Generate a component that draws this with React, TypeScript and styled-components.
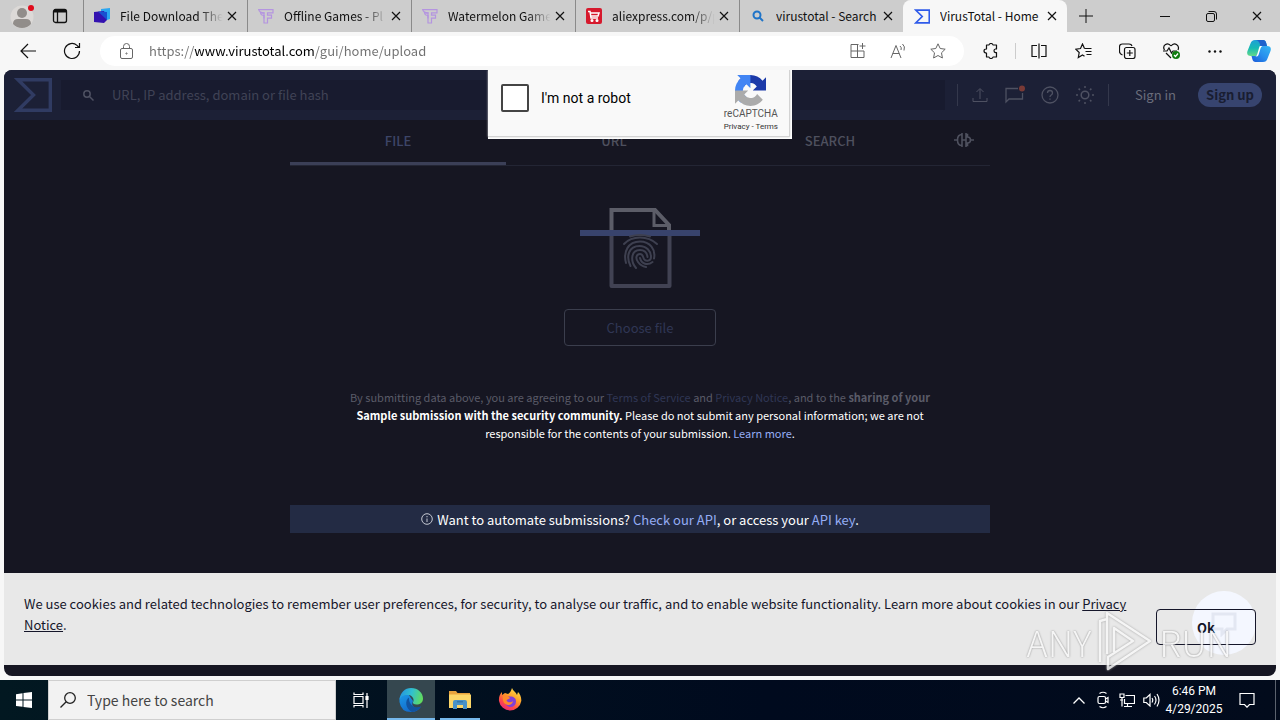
import React from "react";
import styled, { createGlobalStyle, css } from "styled-components";

const chromeFont = `"Noto Sans CJK SC", "Open Sans", sans-serif`;
const pageFont = `"Noto Sans CJK SC", "Noto Sans", sans-serif`;

const Global = createGlobalStyle`
  * { box-sizing: border-box; }
  body { margin: 0; background: #f7f7f7; font-family: ${chromeFont}; font-size: 12px; color: #111; }
  button, input { font: inherit; color: inherit; border: 0; padding: 0; margin: 0; background: none; }
  a { text-decoration: none; color: inherit; }
  svg { display: block; flex: none; }
  p { margin: 0; }
`;

const Desktop = styled.div`
  min-height: 100vh;
  display: flex;
  flex-direction: column;
`;

/* ---------- tab strip ---------- */
const TabStrip = styled.header`
  display: flex;
  height: 32px;
  background: #cdcdcd;
`;
const StripStart = styled.div`
  width: 83px;
  flex: none;
  display: flex;
  align-items: center;
  gap: 18px;
  padding-left: 10px;
`;
const IconButton = styled.button<{ $w?: number }>`
  display: flex;
  align-items: center;
  justify-content: center;
  flex: none;
  width: ${(p) => (p.$w ? p.$w + "px" : "auto")};
  height: 100%;
`;
const BrowserTab = styled.div<{ $active?: boolean }>`
  width: 164px;
  flex: 0 1 auto;
  min-width: 0;
  display: flex;
  align-items: center;
  padding: 0 10px;
  border-left: 1px solid ${(p) => (p.$active ? "#f7f7f7" : "#8a8a8a")};
  ${(p) =>
    p.$active &&
    css`
      background-color: #f7f7f7;
      border-radius: 8px 8px 0 0;
    `}
`;
const TabTitle = styled.span<{ $fade?: boolean }>`
  flex: 1;
  min-width: 0;
  margin-left: 10px;
  overflow: hidden;
  white-space: nowrap;
  font-size: 12px;
  line-height: 20px;
  ${(p) =>
    p.$fade &&
    css`
      mask-image: linear-gradient(90deg, #000 74%, transparent 96%);
    `}
`;
const WindowButtons = styled.div`
  margin-left: auto;
  display: flex;
`;

/* ---------- toolbar ---------- */
const Toolbar = styled.div`
  height: 38px;
  display: flex;
  align-items: center;
  background: #f7f7f7;
  padding-left: 6px;
`;
const AddressBar = styled.label`
  flex: 1;
  height: 30px;
  margin: 0 4px 0 6px;
  padding: 0 6px 0 20px;
  border-radius: 15px;
  background: #fff;
  display: flex;
  align-items: center;
  color: #666;
`;
const AddressInput = styled.input`
  flex: 1;
  min-width: 0;
  margin-left: 16px;
  outline: 0;
  font-size: 13px;
  line-height: 20px;
  background: linear-gradient(90deg, #707070 45px, #000 45px 165px, #707070 165px);
  background-clip: text;
  -webkit-text-fill-color: transparent;
`;
const ToolDivider = styled.span`
  width: 1px;
  height: 16px;
  margin: 0 1px;
  background: #ccc;
`;

/* ---------- web page ---------- */
const Page = styled.main`
  position: relative;
  flex: 1;
  margin: 0 4px 4px;
  display: flex;
  flex-direction: column;
  border-radius: 8px;
  overflow: hidden;
  background: #161622;
  font-family: ${pageFont};
`;
const SiteHeader = styled.div`
  height: 50px;
  display: flex;
  align-items: center;
  padding: 0 14px 0 10px;
  background: #1c2036;
  color: #4e5162;
  font-size: 13px;
`;
const SiteSearch = styled.label`
  flex: 1;
  height: 30px;
  margin: 0 12px 0 9px;
  padding-left: 22px;
  display: flex;
  align-items: center;
  gap: 18px;
  background: #181b2f;
`;
const SiteSearchInput = styled.input`
  flex: 1;
  outline: 0;
  font-size: 13px;
  line-height: 20px;
  &::placeholder { color: #404356; opacity: 1; }
`;
const SiteDivider = styled.span`
  width: 1px;
  height: 22px;
  background: #34384c;
`;
const SiteTools = styled.div`
  display: flex;
  align-items: center;
  gap: 16px;
  padding: 0 13px 0 14px;
`;
const SignIn = styled.a`
  margin: 0 22px 0 26px;
  font-size: 13px;
  line-height: 20px;
  color: #6a6d7b;
`;
const SignUp = styled.a`
  width: 64px;
  border-radius: 12px;
  background: #37446f;
  color: #191d31;
  font-weight: 700;
  font-size: 13px;
  line-height: 24px;
  text-align: center;
`;

const Column = styled.section`
  width: 100%;
  max-width: 700px;
  margin: 0 auto;
  display: flex;
  flex-direction: column;
  align-items: center;
`;
const ModeTabs = styled.nav`
  width: 100%;
  display: flex;
  border-bottom: 1px solid #232534;
`;
const ModeTab = styled.button<{ $active?: boolean; $narrow?: boolean }>`
  flex: ${(p) => (p.$narrow ? "0 0 52px" : "1")};
  height: 45px;
  padding-bottom: 5px;
  display: flex;
  align-items: center;
  justify-content: center;
  font-size: 13px;
  font-weight: 500;
  color: ${(p) => (p.$active ? "#3d4567" : "#4e505e")};
  box-shadow: ${(p) => (p.$active ? "inset 0 -3px #3b3f57" : "none")};
`;
const FileArt = styled.div`
  margin-top: 42px;
`;
const ChooseFile = styled.button`
  width: 152px;
  height: 37px;
  margin-top: 21px;
  border: 1px solid #3b3e4d;
  border-radius: 4px;
  color: #303655;
  font-size: 13px;
`;
const Terms = styled.p`
  margin-top: 42px;
  text-align: center;
  font-size: 11px;
  line-height: 18px;
  color: #fff;
`;
const Dim = styled.span`
  color: #5a5b68;
`;
const TermsLink = styled.a<{ $dim?: boolean }>`
  color: ${(p) => (p.$dim ? "#303655" : "#95adf5")};
`;
const ApiBar = styled.div`
  width: 100%;
  height: 28px;
  margin-top: 63px;
  display: flex;
  align-items: center;
  justify-content: center;
  gap: 4px;
  background: #232b44;
  color: #fff;
  font-size: 13px;
`;
const CookieBar = styled.aside`
  margin-top: auto;
  margin-bottom: 11px;
  min-height: 92px;
  padding: 20px;
  display: flex;
  justify-content: space-between;
  background: #e8e8e8;
  color: #15162a;
`;
const CookieText = styled.p`
  font-size: 13px;
  line-height: 21px;
  max-width: 1104px;
  a { text-decoration: underline; }
`;
const OkButton = styled.button`
  flex: none;
  position: relative;
  z-index: 1;
  width: 100px;
  height: 36px;
  margin-top: 16px;
  border: 1px solid #15162a;
  border-radius: 4px;
  font-size: 13px;
  font-weight: 700;
`;
const ChatBubble = styled.div`
  position: absolute;
  right: 20px;
  bottom: 21px;
  width: 64px;
  height: 64px;
  border-radius: 50%;
  background: #f4f7ff;
  display: flex;
  align-items: center;
  justify-content: center;
`;
const Watermark = styled.div`
  position: absolute;
  z-index: 2;
  right: 44px;
  bottom: 2px;
  display: flex;
  align-items: center;
  gap: 6px;
  font-size: 36px;
  font-weight: 300;
  line-height: 66px;
  color: #f8f8f8;
  opacity: 0.85;
  text-shadow: 0 0 2px #777;
  pointer-events: none;
  svg { filter: drop-shadow(0 0 1px #999); }
`;

/* ---------- captcha ---------- */
const Captcha = styled.div`
  position: absolute;
  top: 0;
  left: 50%;
  width: 304px;
  height: 69px;
  margin-left: -152px;
  padding: 0 2px 2px 0;
  background: #fff;
  color: #000;
`;
const CaptchaBox = styled.div`
  height: 100%;
  padding: 0 11px 0 13px;
  display: flex;
  align-items: center;
  justify-content: space-between;
  background: #f9f9f9;
  border: solid #d3d3d3;
  border-width: 0 1px 1px 0;
  box-shadow: 0 0 2px #ccc;
`;
const CaptchaLabel = styled.label`
  display: flex;
  align-items: center;
  gap: 12px;
  padding-bottom: 10px;
  font-family: Roboto, sans-serif;
  font-size: 14px;
`;
const CaptchaCheck = styled.input`
  appearance: none;
  width: 28px;
  height: 28px;
  border: 2px solid #444;
  border-radius: 2px;
  background: #fff;
`;
const CaptchaBrand = styled.div`
  display: flex;
  flex-direction: column;
  align-items: center;
  font-family: Roboto, sans-serif;
  font-size: 10px;
  line-height: 16px;
  color: #555;
`;
const CaptchaLinks = styled.div`
  font-size: 8px;
  line-height: 10px;
  color: #333;
`;

/* ---------- task bar ---------- */
const TaskBar = styled.footer`
  height: 40px;
  display: flex;
  align-items: stretch;
  background: linear-gradient(90deg, #021821, #000a1e 60%, #020b1c);
  color: #fff;
`;
const TaskSearch = styled.label`
  width: 288px;
  flex: 0 1 auto;
  display: flex;
  align-items: center;
  gap: 11px;
  padding-left: 11px;
  border: 1px solid #cfcfcf;
  background: #f2f2f2;
  color: #222;
`;
const TaskSearchInput = styled.input`
  flex: 1;
  min-width: 0;
  outline: 0;
  font-size: 14px;
  &::placeholder { color: #444; opacity: 1; }
`;
const TaskApps = styled.div`
  display: flex;
  gap: 1px;
`;
const TaskApp = styled.button<{ $active?: boolean; $line?: boolean }>`
  width: ${(p) => (p.$active || p.$line ? 48 : 50)}px;
  flex: none;
  position: relative;
  display: flex;
  align-items: center;
  justify-content: center;
  background: ${(p) => (p.$active ? "#35474f" : "none")};
  &::after {
    content: "";
    position: absolute;
    bottom: 0;
    left: ${(p) => (p.$active ? "0" : "4px")};
    right: ${(p) => (p.$active ? "0" : "4px")};
    height: ${(p) => (p.$active || p.$line ? "2px" : "0")};
    background: #76b9ed;
  }
`;
const Tray = styled.div`
  margin-left: auto;
  display: flex;
  align-items: stretch;
`;
const Clock = styled.time`
  width: 62px;
  text-align: center;
  font-family: Roboto, sans-serif;
  font-size: 12px;
  line-height: 18px;
  padding-top: 2px;
`;
const ShowDesktop = styled.button`
  width: 5px;
  margin-left: 6px;
  border-left: 1px solid #5b626e;
`;

/* ---------- icons ---------- */
type IconProps = { w: number; h?: number; box?: string; sw?: number; color?: string; children: React.ReactNode };
const Icon = ({ w, h, box, sw = 1, color = "currentColor", children }: IconProps) => (
  <svg width={w} height={h ?? w} viewBox={box ?? `0 0 ${w} ${h ?? w}`} fill="none" stroke={color} strokeWidth={sw} aria-hidden="true">
    {children}
  </svg>
);

const Profile = () => (
  <Icon w={24}>
    <circle cx="12" cy="13" r="11.5" fill="#dcd9d7" stroke="none" />
    <circle cx="12" cy="9" r="5" fill="#918d8a" stroke="none" />
    <path d="M3 20q0-5 5-5h8q5 0 5 5q-3.500 4-9 4t-9-4z" fill="#918d8a" stroke="none" />
    <circle cx="21" cy="4" r="3" fill="#e00b1c" stroke="none" />
  </Icon>
);
const Workspaces = () => (
  <Icon w={16} sw={1.3}>
    <rect x="1.500" y="1.500" width="13" height="13" rx="2" />
    <path d="M5.500 4v10.500" />
    <path d="M2 3h12" strokeWidth="3" />
  </Icon>
);
const Close = () => (
  <Icon w={10} sw={1.2}>
    <path d="M1 1l8 8M9 1l-8 8" />
  </Icon>
);
const FavFile = () => (
  <Icon w={16}>
    <path d="M7 1l9-1v11l-3 1-6-2z" fill="#2ba6f0" stroke="none" />
    <path d="M0 4l10-1 3 9-3 3-10-1z" fill="#3312b0" stroke="none" />
    <path d="M4 3.600l9 .4v8z" fill="#1950d0" stroke="none" />
  </Icon>
);
const FavGames = () => (
  <Icon w={16} color="#b494e0" sw={1.2}>
    <path d="M.7 1.700H15v3.200H9.500v2.300H13.500v3H9.500V15H6V7.500Q3 7.500 2.500 5H6V4.800Q1.500 4.800.7 1.700z" />
    <path d="M4 5h2v5.500" />
  </Icon>
);
const FavAli = () => (
  <Icon w={16} color="#fff" sw={1.5}>
    <rect width="16" height="16" rx="2" fill="#d6192d" stroke="none" />
    <path d="M2 3.500h2l1 6.500h7M4.500 5h8.500l-1 3h-7" />
    <circle cx="6" cy="12.500" r=".8" />
    <circle cx="11" cy="12.500" r=".8" />
  </Icon>
);
const FavSearch = () => (
  <Icon w={16} h={12} color="#1f74c8" sw={2}>
    <circle cx="7" cy="5" r="3.500" />
    <path d="M9.500 7.500l3.500 3.500" />
  </Icon>
);
const Sigma = ({ w, h, color, sw }: { w: number; h: number; color: string; sw: number }) => (
  <Icon w={w} h={h} box="0 0 38 34" color={color} sw={sw}>
    <path d="M4 1.700h32.300v30.600H4L19.500 17z" />
  </Icon>
);
const Recaptcha = () => (
  <svg width="31" height="31" viewBox="0 0 64 64" aria-hidden="true">
    <path d="M64 31.955l-.033-1.370V4.687l-7.160 7.160C50.948 4.674 42.033.093 32.050.093c-10.400 0-19.622 4.960-25.458 12.640l11.736 11.860a15.550 15.550 0 0 1 4.754-5.334c2.050-1.600 4.952-2.906 8.968-2.906.485 0 .860.057 1.135.163 4.976.393 9.288 3.140 11.828 7.124l-8.307 8.307L64 31.953" fill="#1c3aa9" />
    <path d="M31.862.094l-1.370.033H4.594l7.160 7.160C4.580 13.147 0 22.060 0 32.046c0 10.400 4.960 19.622 12.640 25.458L24.500 45.768a15.550 15.550 0 0 1-5.334-4.754c-1.600-2.050-2.906-4.952-2.906-8.968 0-.485.057-.860.163-1.135.393-4.976 3.140-9.288 7.124-11.828l8.307 8.307L31.860.095" fill="#4285f4" />
    <path d="M.001 32.045l.033 1.370v25.898l7.160-7.160c5.860 7.173 14.774 11.754 24.760 11.754 10.400 0 19.622-4.960 25.458-12.640l-11.736-11.860a15.550 15.550 0 0 1-4.754 5.334c-2.050 1.600-4.952 2.906-8.968 2.906-.485 0-.860-.057-1.135-.163-4.976-.393-9.288-3.140-11.828-7.124l8.307-8.307L.001 32.046" fill="#ababab" />
  </svg>
);
const Copilot = () => (
  <svg width="24" height="22" viewBox="0 0 24 22" aria-hidden="true">
    <defs>
      <linearGradient id="cpA" x1="0" y1="0" x2="0" y2="1">
        <stop offset="0" stopColor="#1f9fd8" />
        <stop offset=".5" stopColor="#16b9b4" />
        <stop offset="1" stopColor="#63d98a" />
      </linearGradient>
      <linearGradient id="cpB" x1="1" y1="0" x2="0" y2="1">
        <stop offset="0" stopColor="#35b8f2" />
        <stop offset=".5" stopColor="#2890ee" />
        <stop offset="1" stopColor="#1b59d8" />
      </linearGradient>
    </defs>
    <path d="M8 0h8q2.500 0 3.200 3l.8 3h-4L9 16H4q-5 0-3.500-5L3.500 3.500Q4.500 0 8 0z" fill="url(#cpA)" />
    <path d="M9 0h7q2.500 0 3.200 3l.8 3h-5q-1 0-1.500 1Q13 1 9 0z" fill="#1f62cc" />
    <path d="M16 22H8.500q-2.500 0-3.200-3L4.500 16H9l6-10h5q5 0 3.500 5L20.500 18.500Q19.500 22 16 22z" fill="url(#cpB)" />
    <path d="M13 6h2.500q-1.500.5-2 2.500L11.500 15q-.5 1.500-2.500 1.500H8.500q1.200-.5 1.800-2.500L12 8q.3-1.500 1-2z" fill="#fff" />
  </svg>
);
const EdgeLogo = () => (
  <svg width="24" height="24" viewBox="0 0 24 24" aria-hidden="true">
    <defs>
      <linearGradient id="edA" x1="0" y1=".3" x2="1" y2=".5">
        <stop offset="0" stopColor="#2494e0" />
        <stop offset=".5" stopColor="#31c0cf" />
        <stop offset="1" stopColor="#62dc5c" />
      </linearGradient>
      <linearGradient id="edB" x1="0" y1="0" x2=".6" y2="1">
        <stop offset="0" stopColor="#1b9ae8" />
        <stop offset="1" stopColor="#1367c8" />
      </linearGradient>
    </defs>
    <path d="M.5 11C1.500 6 6 5 9.500 6.500L14 13q-2 4 1 6t7-.5Q18.500 24 12 24 2 24 .5 14z" fill="url(#edB)" />
    <path d="M.5 12C1 4.500 6 0 12 0c7 0 12 5 12 10.500 0 4-3 6-6.500 6-2.700 0-4-1-3.500-2.200C15.500 12 14 7.500 9.500 7 5 6.500 1.500 8.500.5 12z" fill="url(#edA)" />
    <path d="M10 9.500C5.500 12.500 6.500 21 13 23.900c4-.2 7-2.200 9-5.400-5.500 2.500-12.500-1-12-9z" fill="#12539f" />
  </svg>
);
const Folder = () => (
  <svg width="22" height="20" viewBox="0 0 22 20" aria-hidden="true">
    <path d="M0 1h7l1.500 2H21v5H0z" fill="#e8a33d" />
    <path d="M0 4.500h22V18H0z" fill="#fcd668" />
    <path d="M4 19v-7q0-2 2-2h10q2 0 2 2v7h-4v-4H8v4z" fill="#4a93c8" />
    <path d="M8 11h6v1.500H8z" fill="#3678ac" />
  </svg>
);
const Firefox = () => (
  <svg width="24" height="24" viewBox="0 0 24 24" aria-hidden="true">
    <defs>
      <linearGradient id="ffA" x1=".8" y1="0" x2=".2" y2="1">
        <stop offset="0" stopColor="#ffe24a" />
        <stop offset=".4" stopColor="#ff9f28" />
        <stop offset=".7" stopColor="#ff4a48" />
        <stop offset="1" stopColor="#e8257a" />
      </linearGradient>
    </defs>
    <path d="M14 0c1 3 4 4 5 7l1-3c2 2 3.500 5 3.300 9A11.300 11.300 0 0 1 1 13C.6 9 2 6 4 4v3l3-2 3 1c2-1 3-3 4-6z" fill="url(#ffA)" />
    <path d="M8 8l4 .5c4 0 6 2 6 5a5.500 5.500 0 0 1-11 0C6.500 12 7 10 8 8z" fill="#8240d8" />
    <path d="M5 7l5 1 2 2c-1 1.500-3 1-3.500 2.500 1 2.500 5 2 6.500.5-.5 3-3 4.500-6 3.800C6 16 4 13 5 7z" fill="#ff8a2a" />
  </svg>
);
const FileScan = () => (
  <svg width="120" height="80" viewBox="0 0 120 80" fill="none" aria-hidden="true">
    <path d="M31.500 25V2H75l14 15v8" stroke="#5c5d68" strokeWidth="4" />
    <path d="M31.500 25v53h58V25" stroke="#414253" strokeWidth="4" strokeLinejoin="round" />
    <path d="M74 2v15.500H90" stroke="#5c5d68" strokeWidth="3" />
    <rect y="22" width="120" height="6" fill="#38436c" />
    <g stroke="#3e4050" strokeWidth="2" strokeLinecap="round">
      <path d="M50 28.500q10-3 20 0" />
      <path d="M44 36q6-6.500 16-6.500T77 36" />
      <path d="M46 55c-3-11 2-21.500 14-21.500 10 0 16 8 14 17" />
      <path d="M50.500 58c-5-10-1.500-20 9-20 7 0 11.500 5 11.500 11 0 4-5 5-7 2-1.500-3-1-5-4-5-3.500 0-5 4-2 8 2.500 3.500 5 4.500 8 5" />
      <path d="M56 60c-6-7-5-18 4-18 5 0 7 3 7.500 7M72.500 54c-5 4-11 2-12.500-4" />
    </g>
  </svg>
);

const tabs = [
  { title: "File Download The", icon: <FavFile /> },
  { title: "Offline Games - Pl", icon: <FavGames /> },
  { title: "Watermelon Game", icon: <FavGames /> },
  { title: "aliexpress.com/p/p", icon: <FavAli /> },
  { title: "virustotal - Search", icon: <FavSearch />, full: true },
  { title: "VirusTotal - Home", icon: <Sigma w={16} h={15} color="#2f5bea" sw={4} />, full: true, active: true },
];

export default function App() {
  return (
    <Desktop>
      <Global />
      <TabStrip>
        <StripStart>
          <IconButton aria-label="Profile"><Profile /></IconButton>
          <IconButton aria-label="Workspaces"><Workspaces /></IconButton>
        </StripStart>
        {tabs.map((t) => (
          <BrowserTab key={t.title} $active={t.active}>
            {t.icon}
            <TabTitle $fade={!t.full}>{t.title}</TabTitle>
            <IconButton aria-label="Close tab"><Close /></IconButton>
          </BrowserTab>
        ))}
        <IconButton $w={37} aria-label="New tab"><Icon w={14}><path d="M7 0v14M0 7h14" /></Icon></IconButton>
        <WindowButtons>
          <IconButton $w={46} aria-label="Minimize"><Icon w={10}><path d="M0 5.500h10" /></Icon></IconButton>
          <IconButton $w={46} aria-label="Restore">
            <Icon w={11}><rect x=".5" y="2.500" width="8" height="8" rx="1.500" /><path d="M2.500.5h5.500q2.500 0 2.500 2.500v5.500" /></Icon>
          </IconButton>
          <IconButton $w={46} aria-label="Close window"><Close /></IconButton>
        </WindowButtons>
      </TabStrip>

      <Toolbar>
        <IconButton $w={44} aria-label="Back"><Icon w={16} sw={1.2}><path d="M16 8H1M8 1L1 8l7 7" /></Icon></IconButton>
        <IconButton $w={44} aria-label="Refresh">
          <Icon w={18} sw={1.2}><path d="M16.500 9a7.500 7.500 0 1 1-2.500-5.600L16 5.500M16.500 1v4.500H12" /></Icon>
        </IconButton>
        <AddressBar>
          <Icon w={13} h={16}><rect x=".5" y="5.500" width="12" height="10" rx="1.500" /><path d="M3.500 5.500V3.500q0-3 3-3t3 3v2" /><circle cx="6.500" cy="10.500" r=".6" /></Icon>
          <AddressInput aria-label="Address" defaultValue="https://www.virustotal.com/gui/home/upload" />
          <IconButton $w={40} aria-label="Apps">
            <Icon w={16}><path d="M8.500 1.500H1v13h13V8H1M7.500 1.500v13M12.500 0v6M9.500 3h6" /></Icon>
          </IconButton>
          <IconButton $w={40} aria-label="Read aloud">
            <Icon w={16}><path d="M1 15L6 2.500 11 15M2.700 10.500h6.600M10 3q2 1.500 1 4M12.500 1q3 2.500 1.500 6.500" /></Icon>
          </IconButton>
          <IconButton $w={40} aria-label="Favorite">
            <Icon w={16}><path d="M8 .8l2.200 4.700 5 .7-3.700 3.600.9 5.200L8 12.500 3.600 15l.9-5.200L.8 6.200l5-.7z" /></Icon>
          </IconButton>
        </AddressBar>
        <IconButton $w={46} aria-label="Extensions">
          <Icon w={16} sw={1.2}><path d="M3.500 2H6q.3-1.500 2-1.500T10 2h3.500v4h-1q-1.500.2-1.500 1.800t1.500 1.800h1V14H10q-.3 1.500-2 1.500T6 14H3.500v-4Q1 10 1 8t2.500-2z" strokeLinejoin="round" /></Icon>
        </IconButton>
        <ToolDivider />
        <IconButton $w={44} aria-label="Split screen">
          <Icon w={16} sw={1.2}><path d="M6 2.500H1v11h5M10 2.500h5v11h-5M8 .5v15" /></Icon>
        </IconButton>
        <IconButton $w={44} aria-label="Favorites">
          <Icon w={17} h={16} sw={1.2}><path d="M9.500 5.500L7.500 1 5.500 5.500.8 6.200 4.200 9.500l-.9 5L7.500 12l2 1.200M9.500 5.500H16.500M10.500 8.500h6M11.500 11.500h5" /></Icon>
        </IconButton>
        <IconButton $w={44} aria-label="Collections">
          <Icon w={17} h={16} sw={1.2}><rect x="5.500" y="4.500" width="10.500" height="11" rx="2" /><path d="M3.500 12q-3-1-3-3.500V4q0-3 3-3H10q2.500 0 3 2M10.800 7v6M7.800 10h6" /></Icon>
        </IconButton>
        <IconButton $w={44} aria-label="Browser essentials">
          <Icon w={17} h={16} sw={1.2}>
            <path d="M8 3Q5.500-.5 2.500 1.500T1.500 7M8 3q2.500-3.500 5.500-1.500T15 7M3 10l5 5M0 8h4l2-3 2.500 5L10 8h4" />
            <circle cx="13" cy="12" r="4" fill="#107c10" stroke="none" /><path d="M11 12l1.500 1.500 2.500-3" stroke="#fff" />
          </Icon>
        </IconButton>
        <IconButton $w={44} aria-label="Settings and more">
          <Icon w={14} h={3}><g fill="currentColor" stroke="none"><circle cx="1.500" cy="1.500" r="1.200" /><circle cx="7" cy="1.500" r="1.200" /><circle cx="12.500" cy="1.500" r="1.200" /></g></Icon>
        </IconButton>
        <IconButton $w={43} aria-label="Copilot"><Copilot /></IconButton>
      </Toolbar>

      <Page>
        <SiteHeader>
          <a href="#home" aria-label="VirusTotal"><Sigma w={38} h={34} color="#303b62" sw={3.4} /></a>
          <SiteSearch>
            <Icon w={11} sw={1.5}><circle cx="4" cy="4" r="3.200" /><path d="M6.500 6.500L10.500 10.500" /></Icon>
            <SiteSearchInput aria-label="Search" placeholder="URL, IP address, domain or file hash" />
          </SiteSearch>
          <SiteDivider />
          <SiteTools>
            <IconButton aria-label="Upload"><Icon w={16}><path d="M8 12V2M4.500 5L8 1.500 11.500 5M1 11v3.500h14V11" /></Icon></IconButton>
            <IconButton aria-label="Comments">
              <Icon w={21} h={20} sw={1.3}><path d="M14 3.500H2V17l3-3h13.500V8" /><circle cx="18" cy="3.500" r="3" fill="#7a3a36" stroke="none" /></Icon>
            </IconButton>
            <IconButton aria-label="Help">
              <Icon w={18} sw={1.3}><circle cx="9" cy="9" r="8" /><path d="M6.500 7q0-2.500 2.500-2.500T11.500 7q0 1.200-1.300 2T9 11M9 12.500v1.300" /></Icon>
            </IconButton>
            <IconButton aria-label="Theme">
              <Icon w={20} sw={1.5}><circle cx="10" cy="10" r="3.800" /><path d="M10 1v2M10 17v2M1 10h2M17 10h2M3.600 3.600L5 5M15 15l1.400 1.400M3.600 16.400L5 15M15 5l1.400-1.400" /></Icon>
            </IconButton>
          </SiteTools>
          <SiteDivider />
          <SignIn href="#signin">Sign in</SignIn>
          <SignUp href="#signup">Sign up</SignUp>
        </SiteHeader>

        <Column>
          <ModeTabs>
            <ModeTab $active>FILE</ModeTab>
            <ModeTab>URL</ModeTab>
            <ModeTab>SEARCH</ModeTab>
            <ModeTab $narrow aria-label="Code insight">
              <Icon w={20} h={16} sw={1.6}><path d="M8 2.500Q3.500 2.500 3.500 8t4.500 5.500M8 1v14M12 1v14M12 2.500h1.500V5q3 0 3 3t-3 3v2.500H12M0 8h3.500M8 8h4M16.500 8H20" /></Icon>
            </ModeTab>
          </ModeTabs>
          <FileArt><FileScan /></FileArt>
          <ChooseFile>Choose file</ChooseFile>
          <Terms>
            <Dim>
              By submitting data above, you are agreeing to our <TermsLink $dim href="#terms">Terms of Service</TermsLink> and{" "}
              <TermsLink $dim href="#privacy">Privacy Notice</TermsLink>, and to the <b>sharing of your</b>
            </Dim>
            <br />
            <b>Sample submission with the security community.</b> Please do not submit any personal information; we are not
            <br />
            responsible for the contents of your submission. <TermsLink href="#more">Learn more</TermsLink>.
          </Terms>
          <ApiBar>
            <Icon w={12} color="#c5c8d2"><circle cx="6" cy="6" r="5.300" /><path d="M6 5.500v3.500M6 3v1.300" /></Icon>
            <span>
              Want to automate submissions? <TermsLink href="#api">Check our API</TermsLink>, or access your{" "}
              <TermsLink href="#key">API key</TermsLink>.
            </span>
          </ApiBar>
        </Column>

        <CookieBar>
          <CookieText>
            We use cookies and related technologies to remember user preferences, for security, to analyse our traffic, and to
            enable website functionality. Learn more about cookies in our <a href="#notice">Privacy Notice</a>.
          </CookieText>
          <OkButton>Ok</OkButton>
        </CookieBar>
        <ChatBubble>
          <Icon w={28} color="#e3e7f2" sw={3}><path d="M3 5h22v15h-8l-5 5v-5H3z" /></Icon>
        </ChatBubble>
        <Watermark aria-hidden="true">
          <span>ANY</span>
          <Icon w={56} h={64} color="#f8f8f8" sw={2.500}>
            <path d="M3 53V12l7-2M10 45V4l43 28-42 28V48L36 32 17 19v24" strokeLinejoin="round" />
          </Icon>
          <span>RUN</span>
        </Watermark>

        <Captcha>
          <CaptchaBox>
            <CaptchaLabel>
              <CaptchaCheck type="checkbox" />
              I'm not a robot
            </CaptchaLabel>
            <CaptchaBrand>
              <Recaptcha />
              reCAPTCHA
              <CaptchaLinks><a href="#cp">Privacy</a> - <a href="#ct">Terms</a></CaptchaLinks>
            </CaptchaBrand>
          </CaptchaBox>
        </Captcha>
      </Page>

      <TaskBar>
        <IconButton $w={48} aria-label="Start">
          <Icon w={16}><path d="M0 2.200L6.500 1.300V7.600H0zM7.500 1.100L16 0v7.600H7.500zM0 8.500h6.500v6.300L0 13.900zM7.500 8.500H16V16l-8.500-1.100z" fill="#fff" stroke="none" /></Icon>
        </IconButton>
        <TaskSearch>
          <Icon w={16} sw={1.3}><circle cx="10" cy="6" r="5.300" /><path d="M6.200 9.800L.5 15.500" /></Icon>
          <TaskSearchInput aria-label="Type here to search" placeholder="Type here to search" />
        </TaskSearch>
        <TaskApps>
          <TaskApp aria-label="Task view">
            <Icon w={16} h={18} sw={1.2}><path d="M1 1.500v2h9v-2M1 16.500v-2h9v2M1 5.500h9v7H1zM14 2v15" /><path d="M13 5.500h2v3h-2z" fill="#fff" /></Icon>
          </TaskApp>
          <TaskApp $active aria-label="Microsoft Edge"><EdgeLogo /></TaskApp>
          <TaskApp $line aria-label="File Explorer"><Folder /></TaskApp>
          <TaskApp aria-label="Firefox"><Firefox /></TaskApp>
        </TaskApps>
        <Tray>
          <IconButton $w={24} aria-label="Show hidden icons"><Icon w={12} h={7} sw={1.3}><path d="M.5 6.500L6 1l5.500 5.500" /></Icon></IconButton>
          <IconButton $w={24} aria-label="Meet now">
            <Icon w={12} h={18} sw={1.2}><rect x="1" y="5.500" width="7.500" height="7" rx="1.500" /><path d="M8.500 8l2.500-1.500v5L8.500 10M2.500 2.500q3.500-2.500 7 0M2.500 15.500q3.500 2.500 7 0" /></Icon>
          </IconButton>
          <IconButton $w={24} aria-label="Network">
            <Icon w={16} sw={1.2}><path d="M6.500 3.500H15.500v8h-10V7M8.500 11.500v3M5 14.500h8M1 2h4v3.500H1zM3 5.500v9M1 8h3" /></Icon>
          </IconButton>
          <IconButton $w={24} aria-label="Volume">
            <Icon w={17} h={14} sw={1.2}><path d="M.8 5v4.500h2.500L7 13V1.500L3.300 5zM9 5q1.500 2 0 4.500M11.500 3q3 4 0 8.500M14 1q4 6 0 12.500" /></Icon>
          </IconButton>
          <Clock>6:46 PM<br />4/29/2025</Clock>
          <IconButton $w={44} aria-label="Notifications">
            <Icon w={16} sw={1.2}><path d="M1 1.500h14v11h-4.500L8 15.200 5.500 12.500H1z" /></Icon>
          </IconButton>
          <ShowDesktop aria-label="Show desktop" />
        </Tray>
      </TaskBar>
    </Desktop>
  );
}
